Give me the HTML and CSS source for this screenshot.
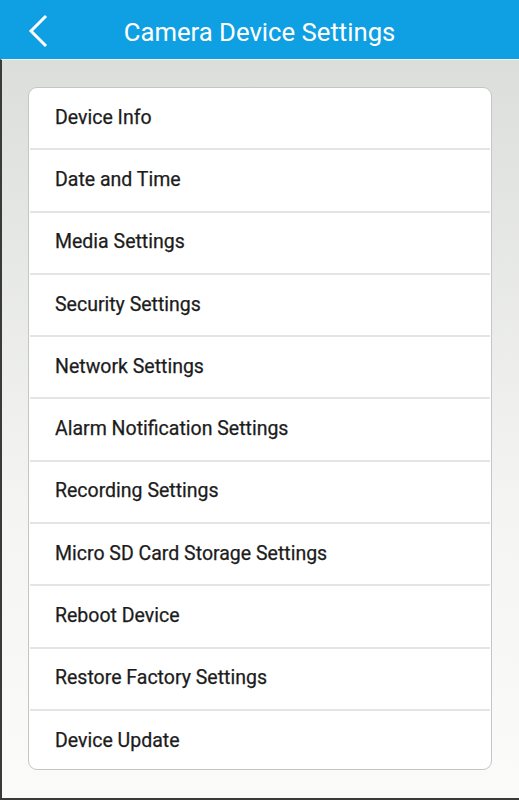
FILE: index.html
```html
<!DOCTYPE html>
<html>

<head>
  <title>Camera Device Settings</title>
  <meta charset="utf-8">
  <link rel="stylesheet" href="styles.css">
</head>

<body>
  <div class="header">
    <a class="back" href="#">
      <svg width="22" height="34" viewBox="0 0 22 34">
        <polyline points="19,2 4,17 19,32" fill="none" stroke="#fff" stroke-width="3" />
      </svg>
    </a>
    <h1>Camera Device Settings</h1>
  </div>
  <div class="page">
    <ul class="menu">
      <li>Device Info</li>
      <li>Date and Time</li>
      <li>Media Settings</li>
      <li>Security Settings</li>
      <li>Network Settings</li>
      <li>Alarm Notification Settings</li>
      <li>Recording Settings</li>
      <li>Micro SD Card Storage Settings</li>
      <li>Reboot Device</li>
      <li>Restore Factory Settings</li>
      <li>Device Update</li>
    </ul>
  </div>
</body>

</html>
```

FILE: styles.css
```css
* {
  padding: 0;
  margin: 0;
  box-sizing: border-box;
}

body {
  width: 519px;
  height: 800px;
  font-family: Roboto, "Liberation Sans", sans-serif;
  overflow: hidden;
}

.header {
  height: 59px;
  background: #0fa0e4;
  display: flex;
  align-items: center;
  justify-content: center;
  position: relative;
  padding-top: 5px;
}

.back {
  position: absolute;
  left: 27px;
  top: 14px;
}

.header h1 {
  color: #fff;
  font-size: 25.7px;
  font-weight: 400;
}

.page {
  height: 741px;
  border-left: 2px solid #3a3a3a;
  border-bottom: 2px solid #3a3a3a;
  border-top: 1px solid #eef0ee;
  background: linear-gradient(#dcdedb, #f4f5f3 60%, #fbfbfa);
  padding: 27px 27px 0 26px;
}

.menu {
  list-style: none;
  background: #fff;
  border: 1.5px solid #c4c6c4;
  border-radius: 9px;
}

.menu li {
  height: 62.3px;
  display: flex;
  align-items: center;
  padding-left: 25px;
  padding-bottom: 2px;
  font-size: 19.5px;
  font-weight: 400;
  color: #1c1c1c;
  -webkit-text-stroke: 0.25px #1c1c1c;
  border-bottom: 2px solid #e3e4e3;
  margin: 0 1px;
}

.menu li:last-child {
  height: 58px;
  padding-bottom: 0;
  padding-top: 1px;
  border-bottom: none;
}
```
